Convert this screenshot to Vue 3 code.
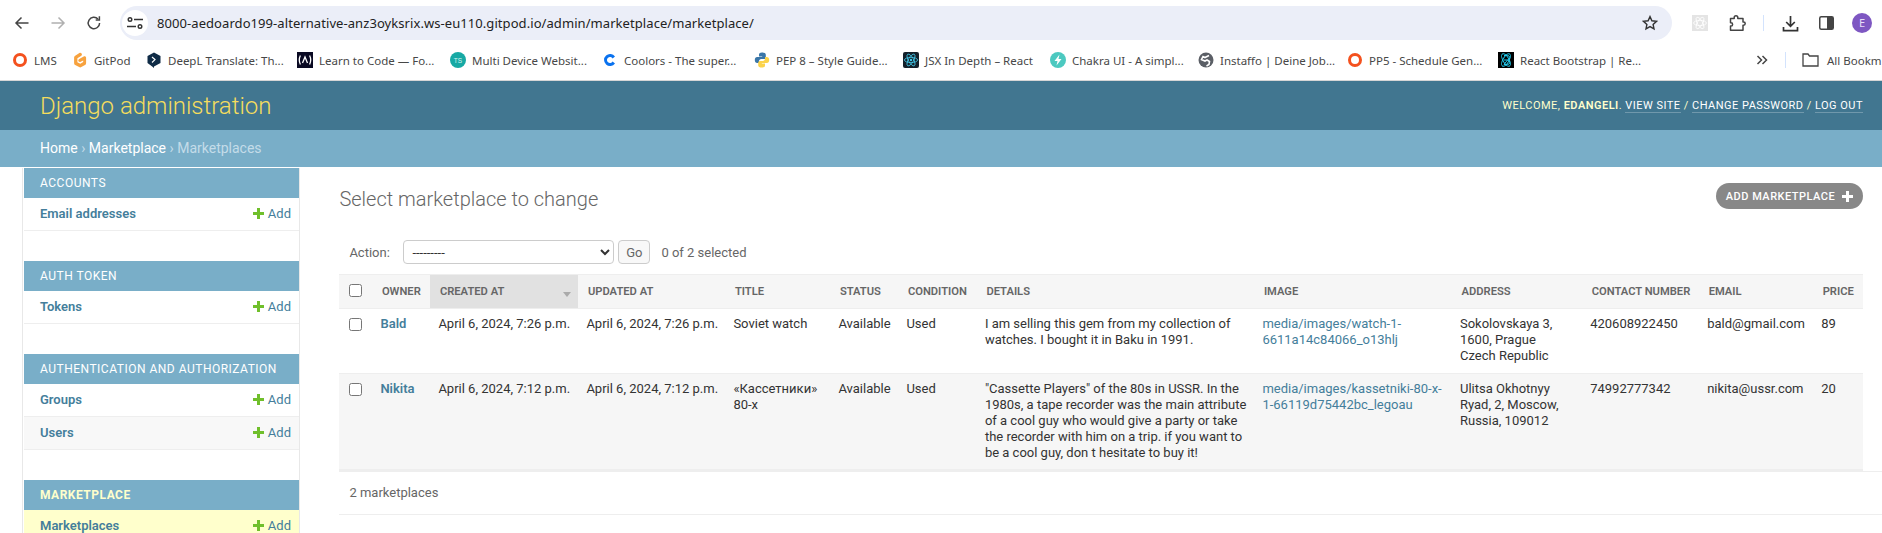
<script setup>
const bookmarks = [
  { icon: 'ring', label: 'LMS', w: 60, color: '#f4511e' },
  { icon: 'gitpod', label: 'GitPod', w: 74 },
  { icon: 'deepl', label: 'DeepL Translate: Th...', w: 151 },
  { icon: 'fcc', label: 'Learn to Code — Fo...', w: 153 },
  { icon: 'ts', label: 'Multi Device Websit...', w: 152 },
  { icon: 'coolors', label: 'Coolors - The super...', w: 152 },
  { icon: 'python', label: 'PEP 8 – Style Guide...', w: 149 },
  { icon: 'atom', label: 'JSX In Depth – React', w: 147 },
  { icon: 'chakra', label: 'Chakra UI - A simpl...', w: 148 },
  { icon: 'instaffo', label: 'Instaffo | Deine Job...', w: 149 },
  { icon: 'ring', label: 'PP5 - Schedule Gen...', w: 151, color: '#f4511e' },
  { icon: 'bootstrap', label: 'React Bootstrap | Re...', w: 140 }
]

const apps = [
  { name: 'Accounts', models: ['Email addresses'] },
  { name: 'Auth Token', models: ['Tokens'] },
  { name: 'Authentication and Authorization', models: ['Groups', 'Users'] },
  { name: 'Marketplace', models: ['Marketplaces'], current: true }
]

const widths = [33, 58, 148, 147, 105, 68, 78.5, 277.5, 197.6, 130.2, 117, 114, 50.2]
const headers = ['Owner', 'Created at', 'Updated at', 'Title', 'Status', 'Condition', 'Details', 'Image', 'Address', 'Contact number', 'Email', 'Price']

const rows = [
  {
    owner: 'Bald',
    created: 'April 6, 2024, 7:26 p.m.',
    updated: 'April 6, 2024, 7:26 p.m.',
    title: 'Soviet watch',
    status: 'Available',
    condition: 'Used',
    details: 'I am selling this gem from my collection of watches. I bought it in Baku in 1991.',
    image: 'media/images/watch-1-6611a14c84066_o13hlj',
    address: ['Sokolovskaya 3,', '1600, Prague', 'Czech Republic'],
    phone: '420608922450',
    email: 'bald@gmail.com',
    price: '89'
  },
  {
    owner: 'Nikita',
    created: 'April 6, 2024, 7:12 p.m.',
    updated: 'April 6, 2024, 7:12 p.m.',
    title: '«Кассетники» 80-х',
    status: 'Available',
    condition: 'Used',
    details: '"Cassette Players" of the 80s in USSR. In the 1980s, a tape recorder was the main attribute of a cool guy who would give a party or take the recorder with him on a trip. if you want to be a cool guy, don t hesitate to buy it!',
    image: 'media/images/kassetniki-80-x-1-66119d75442bc_legoau',
    address: ['Ulitsa Okhotnyy', 'Ryad, 2, Moscow,', 'Russia, 109012'],
    phone: '74992777342',
    email: 'nikita@ussr.com',
    price: '20'
  }
]
</script>

<template>
  <div class="page">
    <div class="browser">
      <div class="toolbar">
        <span class="tool">
          <svg width="16" height="16" viewBox="0 0 16 16" fill="none" stroke="#444" stroke-width="1.5"><path d="M14.5 8H2M7.5 2.5 2 8l5.5 5.5" /></svg>
        </span>
        <span class="tool">
          <svg width="16" height="16" viewBox="0 0 16 16" fill="none" stroke="#b0b0b0" stroke-width="1.5"><path d="M1.5 8H14M8.5 2.5 14 8l-5.5 5.5" /></svg>
        </span>
        <span class="tool">
          <svg width="16" height="16" viewBox="0 0 16 16" fill="none" stroke="#444" stroke-width="1.5"><path d="M13.6 8a5.7 5.7 0 1 1-1.6-4" /><path d="M13.4 1.2v3.7H9.7" /></svg>
        </span>
        <div class="urlbar">
          <span class="site-info">
            <svg width="18" height="14" viewBox="0 0 18 14" fill="none" stroke="#333" stroke-width="1.4"><circle cx="4" cy="3.5" r="1.8" /><path d="M8 3.5h9M1 10.5h9" /><circle cx="14" cy="10.5" r="1.8" /></svg>
          </span>
          <span class="url">8000-aedoardo199-alternative-anz3oyksrix.ws-eu110.gitpod.io/admin/marketplace/marketplace/</span>
          <svg class="star" width="16" height="16" viewBox="0 0 16 16" fill="none" stroke="#333" stroke-width="1.4"><path d="m8 1.6 1.9 4.2 4.6.5-3.4 3.1.9 4.5L8 11.6l-4 2.3.9-4.5-3.4-3.1 4.6-.5Z" /></svg>
        </div>
        <div class="tool-right">
          <span class="tool">
            <svg width="16" height="16" viewBox="0 0 16 16"><rect width="16" height="16" fill="#e4e4e4" /><g fill="none" stroke="#fff" stroke-width=".8"><ellipse cx="8" cy="8" rx="6.4" ry="2.6" /><ellipse cx="8" cy="8" rx="6.4" ry="2.6" transform="rotate(60 8 8)" /><ellipse cx="8" cy="8" rx="6.4" ry="2.6" transform="rotate(120 8 8)" /></g></svg>
          </span>
          <span class="tool puzzle">
            <svg width="18" height="18" viewBox="0 0 18 18" fill="none" stroke="#444" stroke-width="1.5" stroke-linejoin="round"><path d="M2.500 4.500H6.200V3.600a1.800 1.800 0 0 1 3.600 0v.9H15V8h.6a1.600 1.600 0 0 1 0 3.200H15v5H2.500V12H3a1.600 1.600 0 0 0 0-3.200h-.5Z" /></svg>
          </span>
          <span class="tool-sep"></span>
          <span class="tool download">
            <svg width="17" height="17" viewBox="0 0 17 17" fill="none" stroke="#333" stroke-width="1.7"><path d="M8.500 1v10M4.200 7l4.300 4.300L12.800 7M1.500 12v3.600h14V12" /></svg>
          </span>
          <span class="tool">
            <svg width="15" height="14" viewBox="0 0 15 14"><rect x=".75" y=".75" width="13.5" height="12.5" rx="1.5" fill="none" stroke="#444" stroke-width="1.5" /><rect x="8" y="1" width="6" height="12" fill="#444" /></svg>
          </span>
          <span class="tool">
            <span class="avatar">E</span>
          </span>
        </div>
      </div>

      <div class="bookmarks">
        <div v-for="b in bookmarks" :key="b.label" class="bookmark" :style="{ width: b.w + 'px' }">
          <svg class="favicon" width="16" height="16" viewBox="0 0 16 16">
            <circle v-if="b.icon === 'ring'" cx="8" cy="8" r="5.5" fill="none" :stroke="b.color" stroke-width="3" />
            <path v-else-if="b.icon === 'gitpod'" d="M9.600 1.600c.6 1 .3 2-.6 2.500L5.400 6.200v4l2.900 1.600 2.900-1.700V8.400L8.700 9.800c-.8.400-1.700.2-2.200-.6-.4-.8-.1-1.700.7-2.200l4.500-2.600c1.100-.6 2.400.1 2.400 1.400v5.100c0 .8-.4 1.600-1.100 2l-3.700 2.200c-.7.400-1.500.4-2.200 0l-3.900-2.200c-.7-.4-1.100-1.200-1.100-2V5.600c0-.8.400-1.500 1.100-1.900L7.400 1c.8-.4 1.700-.2 2.200.6Z" fill="#f7a23e" />
            <template v-else-if="b.icon === 'deepl'">
              <path d="M8 .5 14.500 4v7L8 14.500V16l-1.500-1.300L1.500 11V4Z" fill="#0f2b46" />
              <path d="m6 5 3 2.600L6 10.500" fill="none" stroke="#fff" stroke-width="1.200" />
            </template>
            <template v-else-if="b.icon === 'fcc'">
              <rect width="16" height="16" fill="#0a0a23" />
              <path d="M3.400 3.500Q1.200 8 3.400 12.500M12.600 3.500Q14.800 8 12.600 12.500M5.500 11 8 5l2.500 6" fill="none" stroke="#fff" stroke-width="1.300" />
            </template>
            <template v-else-if="b.icon === 'ts'">
              <circle cx="8" cy="8" r="8" fill="#17a9a4" />
              <text x="8" y="10.500" text-anchor="middle" font-size="6.500" font-family="Liberation Sans, sans-serif" fill="#d8f5f3">TS</text>
            </template>
            <path v-else-if="b.icon === 'coolors'" d="M13 4.600A6 6 0 1 0 13 11.400L10.600 9.400A3 3 0 1 1 10.600 6.600Z" fill="#0a72ef" />
            <template v-else-if="b.icon === 'python'">
              <path d="M8 .5C5.500.5 5 1.500 5 2.800V4.500h3.200V5H3.200C1.700 5 .8 6.200.8 8c0 1.900.9 3 2.400 3H5V9.300c0-1.200 1-2.200 2.200-2.200H10c1 0 1.800-.8 1.800-1.800V2.800C11.800 1.400 10.500.5 8 .5Z" fill="#3a76a8" />
              <path d="M8 15.500c2.500 0 3-1 3-2.300v-1.700H7.800V11h5c1.500 0 2.400-1.200 2.400-3 0-1.900-.9-3-2.400-3H11v1.700c0 1.200-1 2.200-2.200 2.200H6c-1 0-1.800.8-1.800 1.800v2.500c0 1.400 1.300 2.300 3.800 2.300Z" fill="#fbd34b" />
            </template>
            <template v-else-if="b.icon === 'atom'">
              <rect width="16" height="16" rx="2" fill="#14202a" />
              <g fill="none" stroke="#42c8e8" stroke-width=".8">
                <ellipse cx="8" cy="8" rx="6.600" ry="2.600" />
                <ellipse cx="8" cy="8" rx="6.600" ry="2.600" transform="rotate(60 8 8)" />
                <ellipse cx="8" cy="8" rx="6.600" ry="2.600" transform="rotate(120 8 8)" />
              </g>
              <circle cx="8" cy="8" r="1.200" fill="#42c8e8" />
            </template>
            <template v-else-if="b.icon === 'bootstrap'">
              <rect width="16" height="16" fill="#000" />
              <g fill="none" stroke="#22c6e8" stroke-width="1">
                <ellipse cx="8" cy="8" rx="7" ry="3" transform="rotate(60 8 8)" />
                <ellipse cx="8" cy="8" rx="7" ry="3" transform="rotate(120 8 8)" />
                <path d="M6 3.500h3.500a2 2 0 0 1 0 4.500H6m3.500 0a2.200 2.200 0 0 1 0 4.500H6Z" />
              </g>
            </template>
            <template v-else-if="b.icon === 'chakra'">
              <circle cx="8" cy="8" r="8" fill="#4cc9c0" />
              <path d="M9.500 2.500 4.500 9h3l-1 4.500 5-6.500h-3Z" fill="#fff" />
            </template>
            <template v-else-if="b.icon === 'instaffo'">
              <circle cx="8" cy="8" r="7.500" fill="#5b5f66" />
              <path d="M11 3.500 7 5.500 5 4.500l-1.500 3L7 9l2-1 2.500 1.500L11 12.500 8.500 14" fill="none" stroke="#fff" stroke-width="1.600" />
            </template>
          </svg>
          <span class="bookmark-label">{{ b.label }}</span>
        </div>
        <span class="more">
          <svg width="12" height="10" viewBox="0 0 12 10" fill="none" stroke="#444" stroke-width="1.500"><path d="m1.500 1 4 4-4 4M6.500 1l4 4-4 4" /></svg>
        </span>
        <span class="bm-sep"></span>
        <svg class="folder" width="17" height="14" viewBox="0 0 17 14" fill="none" stroke="#444" stroke-width="1.300"><path d="M1 1h5l1.500 2H16v10H1Z" /></svg>
        <span class="all-bookmarks">All Bookm</span>
      </div>
    </div>

    <header class="site-header">
      <div class="brand">Django administration</div>
      <div class="user-tools">
        Welcome, <strong>edangeli</strong>.
        <a>View site</a> / <a>Change password</a> / <a>Log out</a>
      </div>
    </header>

    <nav class="crumbs">
      <a>Home</a> › <a>Marketplace</a> › Marketplaces
    </nav>

    <div class="main">
      <aside class="sidebar">
        <section v-for="app in apps" :key="app.name" class="app-module">
          <div class="caption" :class="{ current: app.current }">{{ app.name }}</div>
          <div
            v-for="(model, i) in app.models"
            :key="model"
            class="model-row"
            :class="{ alt: i === 1, selected: app.current }"
          >
            <a class="model-link">{{ model }}</a>
            <a class="add-link">
              <svg width="11" height="11" viewBox="0 0 11 11"><path d="M4 0h3v4h4v3H7v4H4V7H0V4h4Z" fill="#70bf2b" /></svg>
              Add
            </a>
          </div>
        </section>
      </aside>

      <main class="content">
        <div class="title-row">
          <h1>Select marketplace to change</h1>
          <a class="add-btn">
            Add marketplace
            <svg width="11" height="11" viewBox="0 0 11 11"><path d="M4 0h3v4h4v3H7v4H4V7H0V4h4Z" fill="#fff" /></svg>
          </a>
        </div>

        <div class="actions">
          <label>Action:</label>
          <select>
            <option>---------</option>
          </select>
          <button class="go">Go</button>
          <span class="counter">0 of 2 selected</span>
        </div>

        <table class="result-list">
          <colgroup>
            <col v-for="(w, i) in widths" :key="i" :style="{ width: w + 'px' }" />
          </colgroup>
          <thead>
            <tr>
              <th class="check"><input type="checkbox" /></th>
              <th
                v-for="h in headers"
                :key="h"
                :class="{ sorted: h === 'Created at' }"
              >
                <span class="th-inner">
                  {{ h }}
                  <i v-if="h === 'Created at'" class="sort-arrow"></i>
                </span>
              </th>
            </tr>
          </thead>
          <tbody>
            <tr v-for="(r, i) in rows" :key="r.owner" :class="{ even: i === 1 }">
              <td class="check"><input type="checkbox" /></td>
              <td><a class="owner">{{ r.owner }}</a></td>
              <td class="nowrap">{{ r.created }}</td>
              <td class="nowrap">{{ r.updated }}</td>
              <td>{{ r.title }}</td>
              <td>{{ r.status }}</td>
              <td>{{ r.condition }}</td>
              <td>{{ r.details }}</td>
              <td><a class="file">{{ r.image }}</a></td>
              <td><div v-for="line in r.address" :key="line">{{ line }}</div></td>
              <td>{{ r.phone }}</td>
              <td>{{ r.email }}</td>
              <td>{{ r.price }}</td>
            </tr>
          </tbody>
        </table>

        <p class="paginator">2 marketplaces</p>
      </main>
    </div>
  </div>
</template>

<style>
html,
body {
  margin: 0;
  height: 533px;
  overflow: hidden;
  background: #fff;
}
</style>

<style scoped>
.page {
  width: 1882px;
  height: 533px;
  overflow: hidden;
  font-family: Roboto, "Liberation Sans", sans-serif;
  font-size: 13px;
  color: #333;
}

.browser {
  height: 80px;
  border-bottom: 1px solid #d6d6d6;
  background: #fff;
  font-family: "Noto Sans", "Liberation Sans", sans-serif;
}
.toolbar {
  display: flex;
  align-items: center;
  height: 46px;
  padding-left: 4px;
}
.tool {
  width: 36px;
  height: 34px;
  display: flex;
  align-items: center;
  justify-content: center;
  flex: none;
}
.urlbar {
  flex: 1;
  height: 34px;
  margin-left: 8px;
  display: flex;
  align-items: center;
  background: #ebeef8;
  border-radius: 17px;
}
.site-info {
  width: 26px;
  height: 26px;
  margin-left: 2px;
  border-radius: 50%;
  background: #fff;
  display: flex;
  align-items: center;
  justify-content: center;
}
.url {
  margin-left: 9px;
  flex: 1;
  font-size: 13px;
  letter-spacing: 0.07px;
  color: #222;
  white-space: nowrap;
}
.star {
  margin-right: 14px;
}
.tool-right {
  display: flex;
  align-items: center;
  width: 210px;
  padding-left: 10px;
  box-sizing: border-box;
  flex: none;
}
.puzzle {
  margin-left: 1px;
}
.tool-sep {
  width: 1px;
  height: 16px;
  margin-left: 8px;
  background: #d3e3fd;
}
.download {
  margin-left: 8px;
}
.avatar {
  width: 20px;
  height: 20px;
  border-radius: 50%;
  background: #7e57c2;
  color: #e8def8;
  font-size: 11px;
  line-height: 20px;
  text-align: center;
}

.bookmarks {
  display: flex;
  align-items: center;
  height: 28px;
  padding: 0 0 0 12px;
  white-space: nowrap;
  overflow: hidden;
  font-size: 11.5px;
  color: #474747;
}
.bookmark {
  display: flex;
  align-items: center;
  gap: 6px;
  flex: none;
}
.favicon {
  flex: none;
}
.more {
  margin-left: 118px;
  display: flex;
}
.bm-sep {
  width: 1px;
  height: 16px;
  margin-left: 17px;
  background: #d3e3fd;
}
.folder {
  margin-left: 16px;
  flex: none;
}
.all-bookmarks {
  margin-left: 8px;
}

.site-header {
  height: 49px;
  background: #417690;
  display: flex;
  align-items: center;
  justify-content: space-between;
  padding: 0 19px 0 40px;
}
.brand {
  font-size: 24px;
  font-weight: 300;
  color: #f5dd5d;
}
.user-tools {
  font-size: 11px;
  letter-spacing: 0.48px;
  text-transform: uppercase;
  color: #ffc;
  font-weight: 400;
}
.user-tools strong {
  font-weight: 600;
}
.user-tools a {
  color: #fff;
  border-bottom: 1px solid rgba(255, 255, 255, 0.25);
}

.crumbs {
  height: 37px;
  line-height: 37px;
  padding-left: 40px;
  background: #79aec8;
  color: #c4dce8;
  font-size: 14px;
  font-weight: 400;
}
.crumbs a {
  color: #fff;
}

.main {
  display: flex;
}

.sidebar {
  width: 275px;
  margin: 1px 0 0 22px;
  padding: 0 0 0 1px;
  border-left: 1px solid #e8e8e8;
  border-right: 1px solid #e8e8e8;
  flex: none;
}
.app-module {
  margin-bottom: 30px;
}
.caption {
  height: 30px;
  line-height: 30px;
  padding-left: 16px;
  background: #79aec8;
  color: #fff;
  font-size: 12px;
  letter-spacing: 0.5px;
  text-transform: uppercase;
}
.caption.current {
  color: #ffc;
  font-weight: 700;
}
.model-row {
  height: 32px;
  border-bottom: 1px solid #eee;
  display: flex;
  align-items: center;
  justify-content: space-between;
  padding: 0 8px 0 16px;
  background: #fff;
}
.model-row a {
  margin-top: -1px;
}
.model-row.alt {
  background: #f8f8f8;
}
.model-row.selected {
  background: #ffc;
}
.model-link {
  color: #447e9b;
  font-weight: 600;
}
.add-link {
  color: #447e9b;
  display: flex;
  align-items: center;
  gap: 4px;
}

.content {
  flex: 1;
  min-width: 0;
  padding-left: 39.4px;
}
.title-row {
  display: flex;
  align-items: flex-start;
  justify-content: space-between;
  padding-right: 19px;
  height: 73px;
}
.title-row h1 {
  margin: 20px 0 0;
  font-size: 20px;
  line-height: 24px;
  font-weight: 300;
  color: #666;
}
.add-btn {
  margin-top: 16px;
  height: 26px;
  width: 147px;
  box-sizing: border-box;
  border-radius: 13px;
  background: #888;
  color: #fff;
  font-size: 11px;
  font-weight: 500;
  letter-spacing: 0.5px;
  text-transform: uppercase;
  display: flex;
  align-items: center;
  justify-content: center;
  gap: 7px;
}

.actions {
  height: 34px;
  display: flex;
  align-items: flex-start;
  padding-left: 10px;
  color: #666;
}
.actions label {
  line-height: 25px;
  width: 54px;
}
.actions select {
  width: 211px;
  height: 24px;
  border: 1px solid #ccc;
  border-radius: 4px;
  background: #fff;
  color: #333;
  font-family: Roboto, sans-serif;
  font-size: 13px;
  padding: 0 4px;
}
.go {
  width: 32px;
  height: 24px;
  margin-left: 4px;
  border: 1px solid #ccc;
  border-radius: 4px;
  background: #f8f8f8;
  color: #666;
  font-family: Roboto, sans-serif;
  font-size: 13px;
  padding: 0;
}
.counter {
  margin-left: 11px;
  line-height: 25px;
}

.result-list {
  width: 1523.8px;
  table-layout: fixed;
  border-collapse: collapse;
  border-top: 1px solid #eee;
  border-bottom: 2px solid #eee;
}
.result-list th {
  height: 34px;
  box-sizing: border-box;
  padding: 0 9.5px;
  background: #f6f6f6;
  border-bottom: 1px solid #eee;
  color: #666;
  font-size: 11.2px;
  font-weight: 600;
  text-transform: uppercase;
  text-align: left;
  white-space: nowrap;
}
.result-list th.sorted {
  background: #e1e1e1;
}
.th-inner {
  display: flex;
  justify-content: space-between;
  align-items: center;
}
.sort-arrow {
  width: 0;
  height: 0;
  margin: 5px -2px 0 0;
  border-left: 4px solid transparent;
  border-right: 4px solid transparent;
  border-top: 5px solid #aaa;
}
.result-list td {
  padding: 7px 8px 9px;
  line-height: 16px;
  vertical-align: top;
  border-bottom: 1px solid #eee;
}
.result-list td.nowrap {
  white-space: nowrap;
}
.result-list tr:last-child td {
  border-bottom: none;
  padding-bottom: 8px;
}
.result-list tr.even td {
  background: #f6f6f6;
}
.result-list .check {
  padding: 0 0 0 10px;
  overflow: hidden;
}
.result-list th.check input {
  margin-top: 1px;
}
.result-list td.check {
  padding-top: 9px;
}
.result-list input {
  width: 13px;
  height: 13px;
  margin: 0;
}
.owner {
  color: #447e9b;
  font-weight: 600;
}
.file {
  color: #447e9b;
}

.paginator {
  margin: 0;
  height: 42px;
  line-height: 42px;
  padding-left: 10px;
  border-top: 1px solid #eee;
  border-bottom: 1px solid #eee;
  color: #666;
}
</style>
